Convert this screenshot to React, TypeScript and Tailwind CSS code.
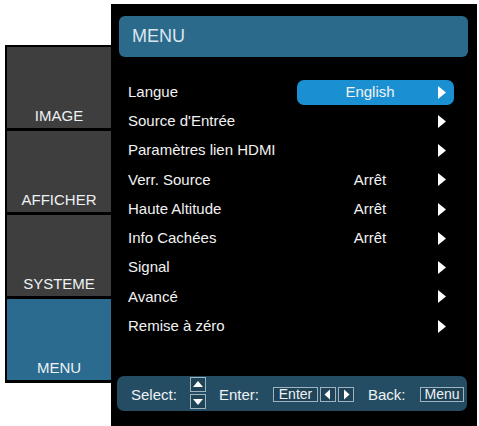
const font = { fontFamily: '"Liberation Sans", Arial, sans-serif' };

const tabs = [
  { label: "IMAGE", active: false },
  { label: "AFFICHER", active: false },
  { label: "SYSTEME", active: false },
  { label: "MENU", active: true },
];

const rows = [
  { label: "Langue", value: "English", selected: true },
  { label: "Source d'Entrée", value: "" },
  { label: "Paramètres lien HDMI", value: "" },
  { label: "Verr. Source", value: "Arrêt" },
  { label: "Haute Altitude", value: "Arrêt" },
  { label: "Info Cachées", value: "Arrêt" },
  { label: "Signal", value: "" },
  { label: "Avancé", value: "" },
  { label: "Remise à zéro", value: "" },
];

function Arrow() {
  return (
    <svg width="8" height="13" viewBox="0 0 8 13" className="shrink-0">
      <polygon points="0,0 8,6.5 0,13" fill="#ffffff" />
    </svg>
  );
}

function KeyBox({ dir }: { dir: "up" | "down" | "left" | "right" }) {
  const pts = {
    up: "2,9 12,9 7,3",
    down: "2,4 12,4 7,10",
    left: "9,1.5 9,11.5 3.5,6.5",
    right: "5,1.5 5,11.5 10.5,6.5",
  }[dir];
  return (
    <div className="w-[16px] h-[15px] border border-[#9fb4c0] bg-[#1f4458] flex items-center justify-center">
      <svg width="14" height="13" viewBox="0 0 14 13">
        <polygon points={pts} fill="#ffffff" />
      </svg>
    </div>
  );
}

export default function App() {
  return (
    <div className="w-[479px] h-[426px] bg-white flex overflow-hidden" style={font}>
      {/* left tabs */}
      <div className="ml-[5px] mt-[45px] w-[106px] self-start bg-black pl-[2px] pt-[2px] pb-[3px] flex flex-col gap-[3px]">
        {tabs.map((t) => (
          <div
            key={t.label}
            className={`h-[81px] flex items-end justify-center pb-[4px] text-[15px] leading-[17px] text-[#eef2f4] ${
              t.active ? "bg-[#2b6b8f]" : "bg-[#3e3e3e]"
            }`}
          >
            {t.label}
          </div>
        ))}
      </div>

      {/* main panel */}
      <div className="mt-[4px] w-[366px] bg-black flex flex-col">
        <div className="mt-[12px] ml-[8px] mr-[9px] h-[41px] rounded-[6px] bg-[#2c6a8c] flex items-center pl-[13px] text-[18px] text-[#dbe6ec]">
          MENU
        </div>

        <div className="mt-[20.5px] flex flex-col">
          {rows.map((r) => (
            <div key={r.label} className="h-[29.25px] flex items-center text-[15px] text-[#f2f2f2]">
              <div className="w-[186px] pl-[17px] whitespace-nowrap">{r.label}</div>
              <div
                className={`w-[157px] h-[25px] rounded-[7px] flex items-center ${
                  r.selected ? "bg-[#1a90d2]" : ""
                }`}
              >
                <span className="w-[130px] ml-[8px] text-center">{r.value}</span>
                <span className="ml-[3px] flex">
                  <Arrow />
                </span>
              </div>
            </div>
          ))}
        </div>

        {/* footer help bar */}
        <div className="mt-[35px] ml-[6px] w-[350px] h-[35px] rounded-[7px] bg-[#244d64] flex items-center pl-[14px] text-[15px] text-[#eef2f4]">
          <span className="w-[59px] mt-[3px]">Select:</span>
          <div className="flex flex-col gap-[2px]">
            <KeyBox dir="up" />
            <KeyBox dir="down" />
          </div>
          <span className="ml-[13px] w-[54px] mt-[3px]">Enter:</span>
          <div className="mt-[3px] flex items-center gap-[2px]">
            <div className="w-[45px] h-[15px] border border-[#9fb4c0] bg-[#1f4458] flex items-center justify-center text-[14px] leading-[13px]">
              Enter
            </div>
            <KeyBox dir="left" />
            <KeyBox dir="right" />
          </div>
          <span className="ml-[14px] w-[52px] mt-[3px]">Back:</span>
          <div className="mt-[3px] w-[44px] h-[15px] border border-[#9fb4c0] bg-[#1f4458] flex items-center justify-center text-[14px] leading-[13px]">
            Menu
          </div>
        </div>
      </div>
    </div>
  );
}
